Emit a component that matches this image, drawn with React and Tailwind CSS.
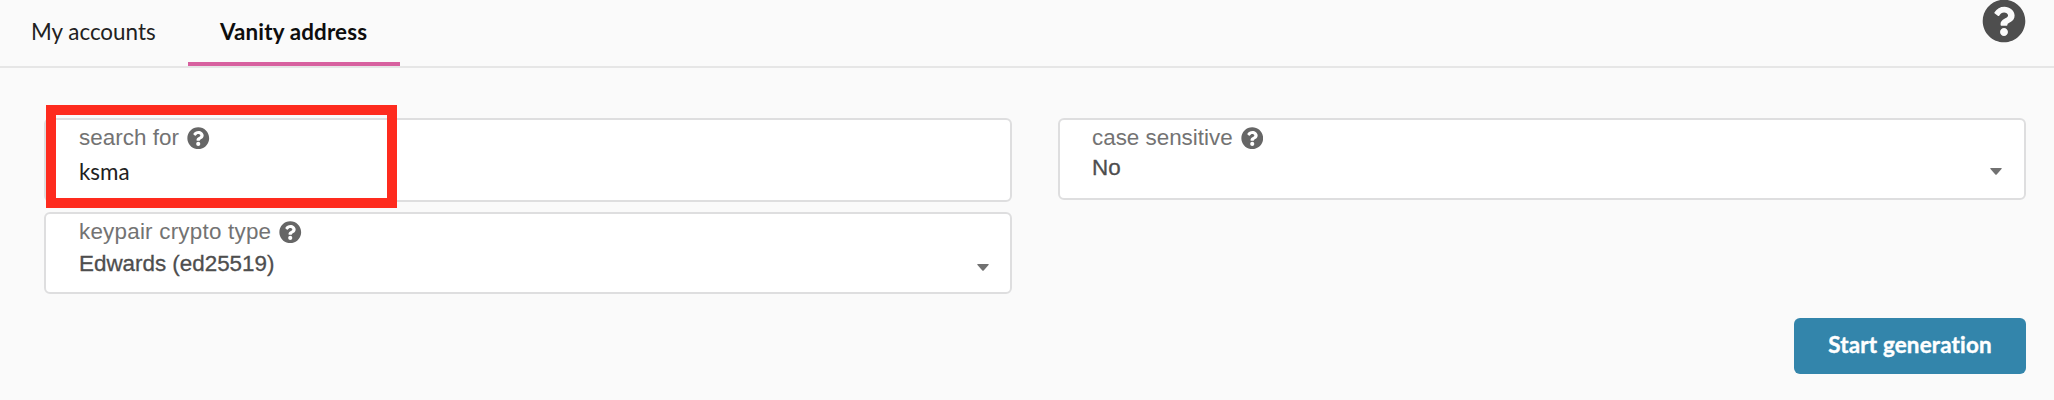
import { FaQuestionCircle } from "react-icons/fa";

function Label({ children, className }) {
  return (
    <div className="flex h-[26px] items-center">
      <span
        className={`whitespace-nowrap font-['Liberation_Sans',sans-serif] text-[22.4px] leading-[26px] text-[#737373] ${className}`}
      >
        {children}
      </span>
      <FaQuestionCircle className="ml-[8px] size-[22.5px] shrink-0 text-[#666666]" />
    </div>
  );
}

function Caret({ className }) {
  return (
    <svg viewBox="0 0 12 7" className={`h-[7px] w-[12px] shrink-0 fill-[#717171] ${className}`}>
      <path d="M0.8 0H11.2Q12.2 0.2 11.5 1L6.7 6.4Q6 7 5.3 6.4L0.5 1Q-0.2 0.2 0.8 0Z" />
    </svg>
  );
}

function Field({ label, labelClass = "", value, valueClass, className, caretClass }) {
  return (
    <div
      className={`flex justify-between rounded-[6px] border-2 border-[#dededf] bg-white pt-[5px] ${className}`}
    >
      <div>
        <Label className={labelClass}>{label}</Label>
        <div className={`whitespace-nowrap text-[22.4px] ${valueClass}`}>{value}</div>
      </div>
      {caretClass && <Caret className={caretClass} />}
    </div>
  );
}

export default function App() {
  return (
    <div className="h-[400px] w-full overflow-hidden bg-[#fafafa] font-['Lato','Liberation_Sans',sans-serif] [font-variant-ligatures:none]">
      <header className="flex h-[68px] items-start justify-between border-b-2 border-[#e6e6e6] pr-[28px]">
        <nav className="flex h-[66px] text-[22.4px] leading-[32px]">
          <div className="w-[188px] pl-[31px] pt-[16px] text-[#212121]">My accounts</div>
          <div className="w-[212px] border-b-4 border-[#d7609f] pl-[32px] pt-[16px] font-bold tracking-[0.16px] text-[#0d0d0d]">
            Vanity address
          </div>
        </nav>
        <FaQuestionCircle className="-mt-px size-[44px] text-[#4e4e4e]" />
      </header>

      <main className="pl-[44px] pr-[28px] pt-[50px]">
        <div className="grid grid-cols-2 items-start gap-x-[46px] gap-y-[10px]">
          <div className="relative">
            <Field
              label="search for"
              labelClass="tracking-[0.05px]"
              value="ksma"
              valueClass="pt-[7px] leading-[28px] text-[#212121]"
              className="h-[84px] pl-[33px]"
            />
            <div className="absolute -top-[13px] left-[2px] h-[103px] w-[351px] border-[10px] border-[#fe2b1e]" />
          </div>
          <Field
            label="case sensitive"
            value="No"
            valueClass="pt-[4px] font-['Liberation_Sans',sans-serif] leading-[26px] text-[#4e4e4e] [-webkit-text-stroke:0.3px_#4e4e4e]"
            className="h-[82px] pl-[32px] pr-[22px]"
            caretClass="mt-[43px]"
          />
          <Field
            label="keypair crypto type"
            labelClass="tracking-[0.23px]"
            value="Edwards (ed25519)"
            valueClass="pt-[6px] font-['Liberation_Sans',sans-serif] leading-[26px] text-[#4e4e4e] [-webkit-text-stroke:0.3px_#4e4e4e]"
            className="h-[82px] pl-[33px] pr-[21px]"
            caretClass="mt-[45px]"
          />
        </div>
        <div className="mt-[24px] flex justify-end">
          <button className="h-[56px] w-[232px] rounded-[6px] bg-[#3385ab] pb-[2px] text-[22.4px] font-bold leading-[32px] tracking-[0.18px] text-white [-webkit-text-stroke:0.4px_white]">
            Start generation
          </button>
        </div>
      </main>
    </div>
  );
}
